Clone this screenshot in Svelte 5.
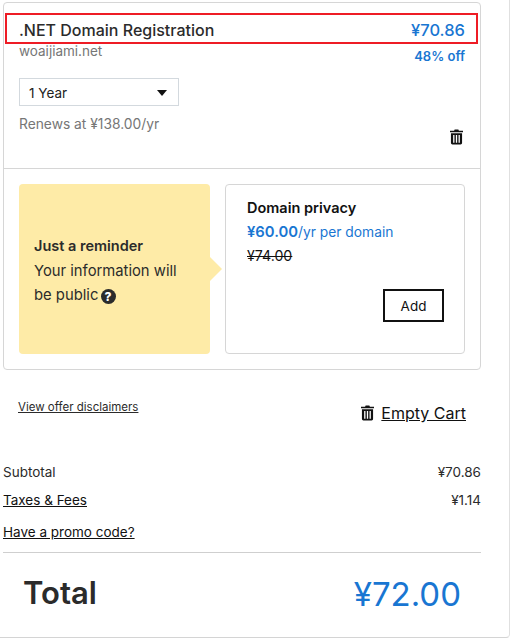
<script>
  const summary = [
    { label: "Subtotal", value: "¥70.86", link: false },
    { label: "Taxes & Fees", value: "¥1.14", link: true },
  ];
</script>

{#snippet trash(cls)}
  <svg class={cls} viewBox="0 0 14 16" aria-hidden="true">
    <path d="M5 0h4l.6 1.4H14v1.6H0V1.4h4.4z" />
    <path fill-rule="evenodd" d="M1 4h12v10.4a1.6 1.6 0 0 1-1.6 1.6H2.600A1.600 1.600 0 0 1 1 14.400zM3.400 5.800v8.400h1.400V5.800zm2.900 0v8.400h1.400V5.800zm2.900 0v8.400h1.400V5.800z" />
  </svg>
{/snippet}

<main class="cart">
  <section class="card">
    <div class="item">
      <div class="item-head">
        <div class="red-box"></div>
        <div class="item-title">
          <h2>.NET Domain Registration</h2>
          <span class="price">¥70.86</span>
        </div>
        <div class="item-sub">
          <span class="domain">woaijiami.net</span>
          <span class="off">48% off</span>
        </div>
      </div>
      <div class="term">
        <span>1 Year</span>
        <i class="caret"></i>
      </div>
      <div class="renew-row">
        <span class="renew">Renews at ¥138.00/yr</span>
        {@render trash("trash-sm")}
      </div>
    </div>

    <div class="upsell">
      <div class="reminder">
        <div>
          <strong>Just a reminder</strong>
          <p>Your information will</p>
          <p>be public <span class="help">?</span></p>
        </div>
      </div>
      <div class="privacy">
        <h3>Domain privacy</h3>
        <div class="offer"><b>¥60.00</b>/yr per domain</div>
        <s>¥74.00</s>
        <button type="button">Add</button>
      </div>
    </div>
  </section>

  <div class="actions">
    <a href="#top" class="disclaimers">View offer disclaimers</a>
    <a href="#top" class="empty">
      {@render trash("trash-lg")}
      <span>Empty Cart</span>
    </a>
  </div>

  <div class="summary">
    {#each summary as row}
      <div class="line">
        {#if row.link}<a href="#top">{row.label}</a>{:else}<span>{row.label}</span>{/if}
        <span>{row.value}</span>
      </div>
    {/each}
    <a href="#top" class="promo">Have a promo code?</a>
  </div>

  <div class="total">
    <span class="total-label">Total</span>
    <span class="total-value">¥72.00</span>
  </div>
</main>

<style>
  :global(body) {
    background: #fff;
    font-family: "Inter", "Open Sans", sans-serif;
    color: #2b2b2b;
  }

  .cart {
    box-sizing: border-box;
    width: 510px;
    height: 638px;
    padding: 2px 28px 0 3px;
    border-right: 1px solid #e0e0e0;
    border-bottom: 1px solid #d4d4d4;
    border-bottom-right-radius: 4px;
  }

  .card {
    border: 1px solid #d6d6d6;
    border-radius: 4px;
  }

  .item {
    height: 166px;
    box-sizing: border-box;
    padding: 10px 15px 0;
    border-bottom: 1px solid #d6d6d6;
  }

  .item-head {
    position: relative;
  }

  .red-box {
    position: absolute;
    left: -14px;
    top: 0;
    width: 473px;
    height: 31px;
    box-sizing: border-box;
    border: 2px solid #ee1c25;
  }

  .item-title,
  .item-sub {
    display: flex;
    justify-content: space-between;
  }

  .item-title {
    align-items: center;
    box-sizing: border-box;
    height: 31px;
    padding-top: 2px;
  }

  h2 {
    margin: 0;
    font-size: 16px;
    font-weight: 500;
    color: #2b2b2b;
  }

  .price {
    font-size: 16.500px;
    font-weight: 500;
    color: #1976d2;
  }

  .domain {
    margin-top: -1px;
    font-size: 13.500px;
    line-height: 16px;
    color: #767676;
  }

  .off {
    margin-top: 4px;
    font-size: 13px;
    line-height: 16px;
    font-weight: 600;
    color: #1976d2;
  }

  .term {
    display: flex;
    align-items: center;
    justify-content: space-between;
    box-sizing: border-box;
    width: 160px;
    height: 28px;
    margin-top: 14px;
    padding: 2px 11px 0 9px;
    border: 1px solid #d3d9de;
    font-size: 13.500px;
    color: #222;
  }

  .caret {
    width: 0;
    height: 0;
    border-left: 5.500px solid transparent;
    border-right: 5.500px solid transparent;
    border-top: 6px solid #111;
  }

  .renew-row {
    display: flex;
    justify-content: space-between;
    margin-top: 10px;
  }

  .renew {
    font-size: 13.800px;
    line-height: 16px;
    color: #767676;
  }

  .trash-sm {
    width: 13px;
    height: 16px;
    margin: 13px 2px 0 0;
    fill: #111;
  }

  .upsell {
    display: flex;
    height: 200px;
    box-sizing: border-box;
    padding: 15px;
    gap: 15px;
  }

  .reminder {
    position: relative;
    display: flex;
    align-items: center;
    box-sizing: border-box;
    width: 191px;
    padding: 3px 15px 0;
    border-radius: 4px;
    background: #feeba7;
    font-size: 14.800px;
    color: #2b2b2b;
  }

  .reminder::after {
    content: "";
    position: absolute;
    right: -12px;
    top: 73px;
    border-left: 12px solid #feeba7;
    border-top: 12px solid transparent;
    border-bottom: 12px solid transparent;
  }

  .reminder strong {
    display: block;
    margin-bottom: 1px;
    font-weight: 600;
    font-size: 14.500px;
    line-height: 24px;
  }

  .reminder p {
    margin: 0;
    line-height: 24px;
  }

  .help {
    display: inline-block;
    width: 15px;
    height: 15px;
    margin-left: -2px;
    border-radius: 50%;
    background: #2b2b2b;
    color: #fff;
    font-size: 12px;
    font-weight: 800;
    line-height: 15px;
    text-align: center;
    vertical-align: -1px;
  }

  .privacy {
    position: relative;
    flex: 1;
    box-sizing: border-box;
    padding: 13px 21px;
    border: 1px solid #d6d6d6;
    border-radius: 4px;
  }

  h3 {
    margin: 0;
    font-size: 14.500px;
    line-height: 20px;
    font-weight: 600;
    color: #111;
  }

  .offer {
    margin-top: 4px;
    font-size: 13.800px;
    line-height: 20px;
    color: #1976d2;
  }

  .offer b {
    font-size: 14.800px;
    font-weight: 600;
  }

  s {
    display: block;
    margin-top: 4px;
    font-size: 14.200px;
    line-height: 20px;
    color: #111;
  }

  button {
    position: absolute;
    right: 20px;
    bottom: 31px;
    width: 61px;
    height: 33px;
    padding: 0;
    border: 2px solid #111;
    border-radius: 0;
    background: #fff;
    font: inherit;
    font-size: 13.500px;
    color: #111;
  }

  .actions {
    display: flex;
    justify-content: space-between;
    align-items: flex-start;
    padding: 30px 15px 0;
    height: 62px;
  }

  a {
    color: #111;
    text-decoration: underline;
  }

  .disclaimers {
    font-size: 11.500px;
    color: #2b2b2b;
  }

  .empty {
    display: flex;
    align-items: center;
    gap: 7px;
    margin-top: 3px;
    font-size: 16px;
  }

  .trash-lg {
    width: 13px;
    height: 16px;
    fill: #111;
  }

  .summary {
    font-size: 13.500px;
  }

  .line {
    display: flex;
    justify-content: space-between;
    height: 28px;
    line-height: 20px;
  }

  .promo {
    display: block;
    margin-top: 4px;
    line-height: 20px;
  }

  .total {
    display: flex;
    justify-content: space-between;
    align-items: center;
    box-sizing: border-box;
    height: 84px;
    margin-top: 10px;
    padding: 0 20px 1px;
    border-top: 1px solid #cfcfcf;
  }

  .total-label {
    margin-bottom: 4px;
    font-size: 31px;
    font-weight: 600;
    color: #2b2b2b;
  }

  .total-value {
    font-size: 33px;
    color: #1976d2;
  }
</style>
